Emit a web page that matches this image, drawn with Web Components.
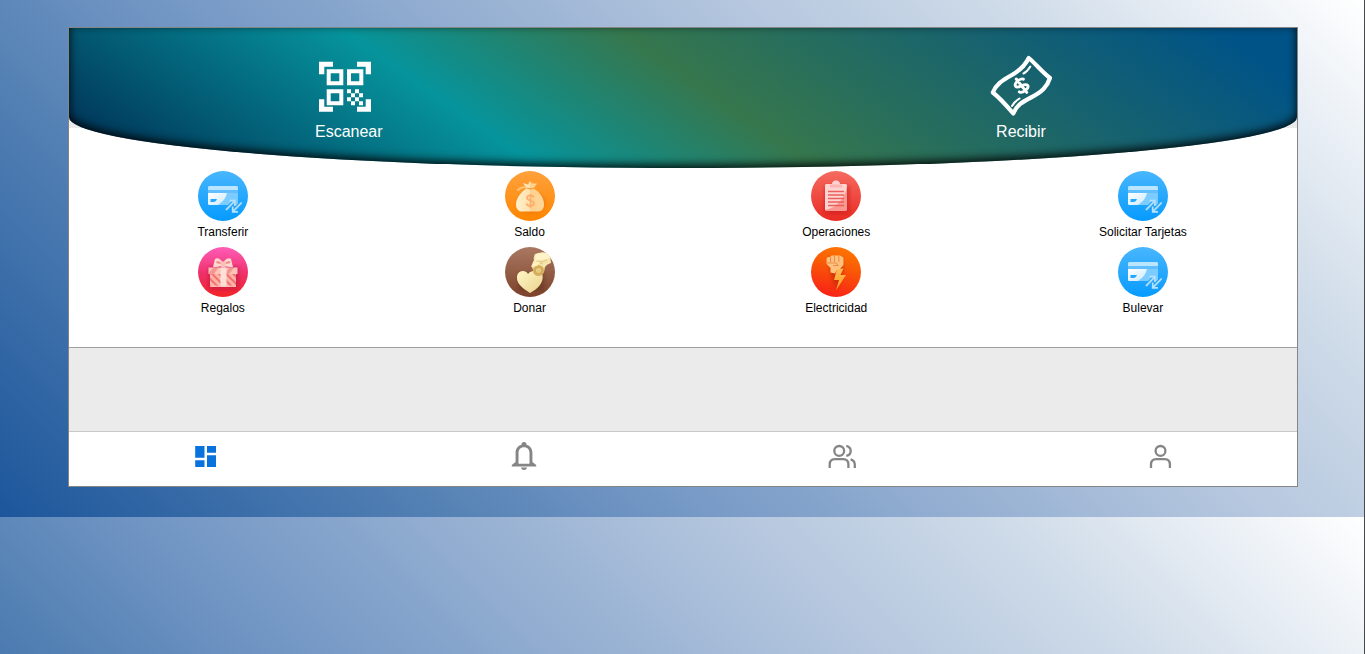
<!DOCTYPE html>
<html lang="es">
<head>
<meta charset="utf-8">
<title>Billetera</title>
<style>
html{background:#fff;height:100%}
body{margin:0;height:100%;font-family:"Liberation Sans",Arial,sans-serif;overflow:hidden}
</style>
</head>
<body>
<wallet-page>
  <wallet-panel>
    <wallet-header slot="header">
      <quick-action icon="qr">Escanear</quick-action>
      <quick-action icon="note">Recibir</quick-action>
    </wallet-header>
    <service-tile icon="card">Transferir</service-tile>
    <service-tile icon="bag">Saldo</service-tile>
    <service-tile icon="list">Operaciones</service-tile>
    <service-tile icon="card">Solicitar Tarjetas</service-tile>
    <service-tile icon="gift">Regalos</service-tile>
    <service-tile icon="donate">Donar</service-tile>
    <service-tile icon="power">Electricidad</service-tile>
    <service-tile icon="card">Bulevar</service-tile>
    <tab-bar slot="tabs"></tab-bar>
  </wallet-panel>
</wallet-page>
<script>
const icons = {
  qr: `<svg width="60" height="60" viewBox="0 0 60 60" fill="#fff">
    <path d="M0 6h14v5H5.3v7.500H0zM38 6h14v12.500h-5.300V11H38zM0 43.500h5.300V51H14v5H0zM46.700 43.500H52V56H38v-5h8.700z" transform="translate(0 -.2)"/>
    <path fill-rule="evenodd" d="M7.700 13.300h16.600v16H7.700zm4 4v8h8.600v-8zM28 13.300h16.300v16H28zm4 4v8h8.300v-8zM7.700 33.300h16.600v16H7.700zm4 4v8h8.600v-8z"/>
    <path d="M28 33.300h4v4h-4zm8 0h4v4h-4zm-4 4h4v4h-4zm8 0h4v4h-4zm-12 4h4v4h-4zm8 0h4v4h-4zm-4 4h4v4h-4zm8 0h4v4h-4z"/></svg>`,
  note: `<svg width="62" height="62" viewBox="0 0 62 62" fill="none" stroke="#fff" stroke-linecap="round" stroke-linejoin="round">
    <path stroke-width="4.200" d="M38.700 3C35 11 29 16 21 20.500C12 25.500 6 29.500 2.800 37.500C10 43 16 50 23.300 58.500C27 50 32 47 41 42.500C52 37 57 32 60 23C52 17 46 9 38.700 3Z"/>
    <path stroke-width="2" d="M33.500 18.500Q37.500 16.500 40.300 11.500M22 51Q24.500 46.500 29.500 43.500"/>
    <g transform="translate(31.500 30.700) rotate(-38)" stroke-width="2.900"><path d="M5.500-4C4-7-5-7-5-3C-5 1 5-1 5 3.500C5 7-4.500 7-5.500 3.500M0-8.500V8.500"/></g></svg>`,
  card: `<svg width="50" height="50" viewBox="0 0 50 50"><defs><linearGradient id="g" x2="0" y2="1"><stop stop-color="#48b6fd"/><stop offset="1" stop-color="#069bff"/></linearGradient><linearGradient id="c" x2="1" y2="1"><stop stop-color="#fff"/><stop offset="1" stop-color="#caeaff"/></linearGradient></defs>
    <circle cx="25" cy="25" r="25" fill="url(#g)"/>
    <rect x="10" y="15" width="30" height="19" rx="1.500" fill="#7dccff"/>
    <path d="M10 16.500Q10 15 11.500 15h27q1.500 0 1.500 1.500V19H10z" fill="#b9e5ff"/>
    <path d="M10 19h30v3H10z" fill="#62bfff"/>
    <path d="M10 22h19c-1 5-4 9-9 12h-8.500q-1.500 0-1.500-1.500z" fill="url(#c)"/>
    <path d="M12.500 28h6.500q-1 3-3 3h-3.500z" fill="#23a8ff"/>
    <g fill="none" stroke="#2da5f2" stroke-width="4"><path d="M28 39 36.500 30M43.500 31.500 35 40.500"/></g>
    <g fill="none" stroke="#b4e2ff" stroke-width="1.700"><path d="M28 39 36.800 29.800M31.500 29.700h5.400V35M43.700 31.500 34.800 40.700M34.700 35.500v5.300h5.300"/></g></svg>`,
  bag: `<svg width="50" height="50" viewBox="0 0 50 50"><defs><linearGradient id="g" x2="0" y2="1"><stop stop-color="#ffa13c"/><stop offset="1" stop-color="#ff8600"/></linearGradient><linearGradient id="b"><stop stop-color="#fff0cc"/><stop offset=".5" stop-color="#ffe2ac"/><stop offset=".51" stop-color="#ffd08c"/><stop offset="1" stop-color="#ffd79a"/></linearGradient><filter id="s"><feGaussianBlur stdDeviation="1.800"/></filter></defs>
    <circle cx="25" cy="25" r="25" fill="url(#g)"/><ellipse cx="26" cy="32" rx="15" ry="11" fill="#e86d00" opacity=".45" filter="url(#s)"/>
    <path d="m18 12 5 1.500 2-3.500 2.500 2.500 4.500 0-3.500 5C35 21 39 27 39 33.500c0 4-2 6.500-5 7H16c-3-.5-5-3-5-7 0-6 4.500-12 10.500-16z" fill="url(#b)"/>
    <path d="M21.500 17q4 1.500 8 0" fill="none" stroke="#ff9c35" stroke-width="1.300"/><path d="M21 16.500q-5-1-8.500 3" fill="none" stroke="#ffc273" stroke-width="2"/>
    <path d="M29 26.500c-1-3-7-3-7 .5 0 3 7 2 7 5 0 4-7 3.500-7.500.5M25.500 23v14" fill="none" stroke="#ffae6c" stroke-width="1.700"/></svg>`,
  list: `<svg width="50" height="50" viewBox="0 0 50 50"><defs><linearGradient id="g" x2="0" y2="1"><stop stop-color="#f56b60"/><stop offset="1" stop-color="#e92a23"/></linearGradient><filter id="s"><feGaussianBlur stdDeviation="2"/></filter></defs>
    <circle cx="25" cy="25" r="25" fill="url(#g)"/><rect x="14" y="15" width="24" height="27" fill="#b90e0e" opacity=".5" filter="url(#s)"/>
    <path d="M15.500 13H21q.5-3.500 4-3.500t4 3.500h5.500q1.500 0 1.500 1.500v24q0 1.500-1.500 1.500h-19q-1.500 0-1.500-1.500v-24q0-1.500 1.500-1.500z" fill="#f99790"/>
    <path d="M15.500 13H21q.5-3.500 4-3.500t4 3.500h5.500q1.500 0 1.500 1.500C35 26 26 37 14 39V14.500q0-1.500 1.500-1.500z" fill="#ffd3d1"/>
    <path d="M19 13.500h12v3H19z" fill="#ffb4b0"/><path d="M17 20.500h16M17 24h16M17 27.500h16M17 31h16M17 34.500h16" stroke="#ea5f5a" stroke-width="1.300"/></svg>`,
  gift: `<svg width="50" height="50" viewBox="0 0 50 50"><defs><linearGradient id="g" x2="0" y2="1"><stop stop-color="#ff5cb8"/><stop offset=".55" stop-color="#ee2f68"/><stop offset="1" stop-color="#f32525"/></linearGradient><pattern id="p" width="5" height="5" patternUnits="userSpaceOnUse" patternTransform="rotate(-45)"><path d="M0 0h5v5H0z" fill="#ffb0a7"/><path d="M0 0h1.800v5H0z" fill="#ee6c64"/></pattern><filter id="s"><feGaussianBlur stdDeviation="2"/></filter></defs>
    <circle cx="25" cy="25" r="25" fill="url(#g)"/><rect x="11" y="20" width="29" height="22" fill="#a70c37" opacity=".5" filter="url(#s)"/>
    <path d="M12 27h26v13H12z" fill="url(#p)"/><path d="M10.500 20.500h29v6.500h-29z" fill="#ffc3b9"/><path d="m11 26 4-5h5l-4 6h-5zm20-5h5l-5 6h-4z" fill="#f59790"/>
    <path d="M22.500 20.500h6V40h-6z" fill="#ffe0d9"/><path d="M12 38.500h26V40H12z" fill="#ffc3b9" opacity=".7"/>
    <path d="M25 16c-2-4-6-6-8-4l-2 8c4 0 7 0 10-2 3 2 6 2 10 2l-2-8c-2-2-6 0-8 4z" fill="#ffd8ce"/><path d="M24 16.500q-3-3-6-2 0 3 6 2zm2.500 0q3-3 6-2 0 3-6 2z" fill="#ef8b8d"/><path d="M23 14.500h4.500V20H23z" fill="#ffc1b7"/></svg>`,
  donate: `<svg width="50" height="50" viewBox="0 0 50 50"><defs><linearGradient id="g" x2="0" y2="1"><stop stop-color="#aa7861"/><stop offset="1" stop-color="#7c422a"/></linearGradient><linearGradient id="h" x2="1" y2="1"><stop stop-color="#fff7c6"/><stop offset="1" stop-color="#ebd28c"/></linearGradient><clipPath id="k"><circle cx="25" cy="25" r="25"/></clipPath><filter id="s"><feGaussianBlur stdDeviation="2"/></filter></defs>
    <circle cx="25" cy="25" r="25" fill="url(#g)"/><g clip-path="url(#k)">
    <path d="M14 26h25v17H14z" fill="#4d2012" opacity=".4" filter="url(#s)"/>
    <path d="M23 27c-3-5-10-3-11 2-1 7 5 12 13 17 8-4 14-11 12.500-18-1-5-11-6-14.500-1z" fill="url(#h)"/>
    <path d="M30 7q7-3 15 0l1 9q-4 1-6 4l-1 5q-3 3-6 2-5-2-6-7 .500-4 2-6 -1-4 1-7z" fill="#f5e5aa"/><path d="M31 7q7-3 14 0l1 4-16 3z" fill="#fff3c8"/>
    <path d="m31 14 6 1 5-2M38 17l-3-1" fill="none" stroke="#dcc486"/>
    <circle cx="33.500" cy="23.500" r="5.600" fill="#d7b15f"/><circle cx="33.500" cy="23.500" r="3.300" fill="#e5ca80" stroke="#cba452"/><path d="m28.500 14-2.500 6 6-1 3-4z" fill="#fff0bc"/></g></svg>`,
  power: `<svg width="50" height="50" viewBox="0 0 50 50"><defs><linearGradient id="g" x1=".65" x2=".4" y2="1"><stop stop-color="#ff7600"/><stop offset=".35" stop-color="#f95d05"/><stop offset="1" stop-color="#f92117"/></linearGradient><linearGradient id="b" x2="0" y2="1"><stop stop-color="#ffbb55"/><stop offset="1" stop-color="#ff9b1f"/></linearGradient><filter id="s"><feGaussianBlur stdDeviation="2"/></filter></defs>
    <circle cx="25" cy="25" r="25" fill="url(#g)"/><path d="M17 12h15v15l-7 16-5-17z" fill="#a21c00" opacity=".5" filter="url(#s)"/>
    <path d="M15.500 12q0-2 2-2H19q.5-1.500 2-1.500h7q2 0 2.500 1 2 0 2 2V18L29 22l-3 1-2 3.500-4.500-1V21L15.500 17z" fill="#ffc17d"/>
    <path d="M19.500 10v5M23.500 9v6M27.800 9v6M16 16h9l2 2.500h-5" fill="none" stroke="#e98f49" stroke-width="1.100"/>
    <path d="m26 22-3 11h5l-3 10.500L35 28h-5.500l3-6.500z" fill="url(#b)"/></svg>`,
  dash: `<svg width="28" height="28" viewBox="0 0 28 28" fill="#0873dc"><path d="M3.200 3h9.300v11.800H3.200zM15 3h9v6.800h-9zM3.200 17.200h9.300V24H3.200zM15 12.200h9V24h-9z"/></svg>`,
  bell: `<svg width="28" height="28" viewBox="0 0 28 28" fill="#858585"><path fill-rule="evenodd" d="M14-.9c1.600 0 2.500.9 2.500 2.300v.4c3.800 1 5.900 4 5.900 8v9.300l3.800 3v1.500H1.800v-1.500l3.800-3V9.800c0-4 2.100-7 5.900-8v-.4C11.500 0 12.400-.9 14-.9zM14 4.200c-3.500 0-5.500 2.300-5.500 5.800v10.700h11V10c0-3.500-2-5.800-5.500-5.800zM11 24.600h6c-.3 1.700-1.400 2.500-3 2.500s-2.700-.8-3-2.500z"/></svg>`,
  users: `<svg width="28" height="28" viewBox="0 0 28 28" fill="none" stroke="#858585" stroke-width="2.300"><circle cx="11.200" cy="7.900" r="4.900"/><path d="M1.700 25v-3.500c0-3.400 2-5.400 5.200-5.400h8.300c3.200 0 5.200 2 5.200 5.400V25M18.300 2.900c2.800.7 4.400 2.500 4.400 5s-1.600 4.300-4.400 5M22.600 16.400c2.700.8 4.200 2.600 4.200 5.300V25"/></svg>`,
  user: `<svg width="28" height="28" viewBox="0 0 28 28" fill="none" stroke="#858585" stroke-width="2.300"><circle cx="14.500" cy="7.900" r="4.900"/><path d="M5 25v-3.500c0-3.400 2-5.400 5.200-5.400h8.500c3.200 0 5.200 2 5.200 5.400V25"/></svg>`
};
function define(name, render) {
  customElements.define(name, class extends HTMLElement {
    constructor() { super(); this.attachShadow({ mode: "open" }); }
    connectedCallback() {
      const t = document.createElement("template");
      t.innerHTML = render(this);
      this.shadowRoot.replaceChildren(t.content.cloneNode(true));
    }
  });
}
define("wallet-page", () => `<style>
  :host{display:block;box-sizing:border-box;height:654px;padding:27px 67px 0 68px;border-right:1px solid #48494b;
    background:linear-gradient(45deg,#1c569b 0%,#5c87b8 27%,#6f94c3 34%,#b4c6de 66%,#cddae8 80%,#fff 100%) 0 0/100% 517px repeat-y}
  </style><slot></slot>`);
define("wallet-panel", () => `<style>
  :host{display:flex;flex-direction:column;box-sizing:border-box;width:1230px;height:460px;border:1px solid #858585;background:#ebebeb}
  .top{height:100px;flex:none}
  .grid{box-sizing:border-box;height:220px;flex:none;display:grid;grid-template-columns:repeat(4,306.7px);grid-auto-rows:76px;padding:43px 0 0 .5px;background:#fff;border-bottom:1px solid #a0a0a0}
  .space{flex:1}
  </style><div class="top"><slot name="header"></slot></div><div class="grid"><slot></slot></div><div class="space"></div><slot name="tabs"></slot>`);
define("wallet-header", () => `<style>
  :host{display:flex;justify-content:space-between;box-sizing:border-box;height:140px;padding:27px 245px 0 246px;position:relative;
    border-radius:0 0 50% 50%/0 0 51px 51px;
    background:linear-gradient(35deg,#002850 0%,#06949c 33%,#36774d 52.3%,#005387 94.5%);box-shadow:inset 0 -3px 10px rgba(0,0,0,.9)}
  </style><slot></slot>`);
define("quick-action", el => `<style>
  :host{display:flex;flex-direction:column;align-items:center;color:#fff;font-size:16px;line-height:18px}
  .i{height:68px}svg{display:block}:host([icon=qr]) svg{margin-top:1px}
  </style><div class="i">${icons[el.getAttribute("icon")]}</div><span><slot></slot></span>`);
define("service-tile", el => `<style>
  :host{display:flex;flex-direction:column;align-items:center;color:#000;font-size:12px;line-height:14px}
  svg{display:block;margin-bottom:4px}
  </style>${icons[el.getAttribute("icon")]}<span><slot></slot></span>`);
define("tab-bar", () => `<style>
  :host{display:flex;justify-content:space-between;box-sizing:border-box;height:55px;flex:none;padding:11px 123px 0;background:#fff;border-top:1px solid #c8c8c8}
  svg{display:block;overflow:visible}
  </style>${icons.dash}${icons.bell}${icons.users}${icons.user}`);
</script>
</body>
</html>
